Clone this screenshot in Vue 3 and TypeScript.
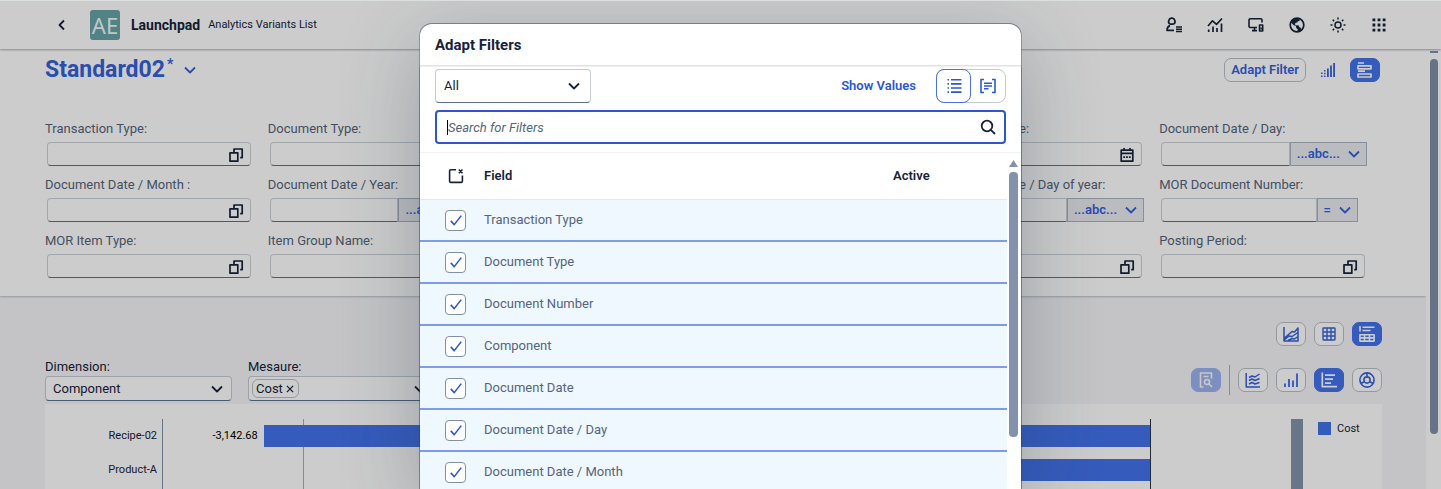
<script setup lang="ts">
import { h, ref } from 'vue'

interface Glyph {
  line?: string
  fill?: string
  width?: number
}

interface FilterField {
  id: string
  label?: string
  kind: 'help' | 'date' | 'operator'
  operator?: string
}

const glyphs: Record<string, Glyph> = {
  back: { line: 'M10 3.5 5.5 8 10 12.5', width: 1.8 },
  down: { line: 'M3 5.5 8 10.5 13 5.5', width: 1.8 },
  copy: { line: 'M2 5.8h7.8v8.4H2zM6 5.5V2h8.2v8.6h-2', width: 1.7 },
  calendar: {
    line: 'M2.2 3.2h11.6v11H2.2zM2.2 6.4h11.6M5 1v3M11 1v3',
    fill: 'M4.3 9.3h1.8v1.8H4.3zM7.1 9.3h1.8v1.8H7.1zM9.9 9.3h1.8v1.8H9.9z',
    width: 1.7,
  },
  person: {
    line: 'M5.8 1.2a3 3.2 0 0 1 1.8 5.9M5.8 1.2a3 3.2 0 0 0-1.8 5.9M4 7.1h3.6M4 8.6C2 9.3 1 11 1 13.3h7',
    fill: 'M10 9.2h6v1.5h-6zM10 11.5h6V13h-6zM10 13.8h6v1.5h-6z',
    width: 1.7,
  },
  trend: {
    line: 'M1 9 5.5 3.8 9.5 7.3 15 1.5M6 9.5V15M10 11V15M14.5 6.5V15M1.7 12.5V15',
    width: 1.7,
  },
  devices: {
    line: 'M9 10.500H2.2c-.8 0-1.2-.4-1.2-1.2V3c0-.8.4-1.2 1.2-1.2h10.6c.8 0 1.2.4 1.2 1.2v2.5M6.500 10.500v3M4 13.600h5M11.500 8h3.200v6h-3.200z',
    fill: 'M12.300 10.500h1.600v2h-1.600z',
    width: 1.6,
  },
  globe: {
    line: 'M8 1.200a6.800 6.800 0 1 1 0 13.600a6.800 6.800 0 0 1 0-13.600z',
    fill: 'M8 1a7 7 0 0 0-6.300 4l3 3.200 2 .5.500 2.300 1.600 1.300L8 15a7 7 0 0 0 4.500-1.700l-.800-2.600-1.500-.600-.200-1.600-3.300-.200-.900-1.200 1-1.300 1.600-.300.300-1.300 1.800-.300.200-2.200z',
    width: 1.7,
  },
  sun: {
    line: 'M8 5a3 3 0 1 1 0 6a3 3 0 0 1 0-6zM8 .5v2M8 13.500v2M.5 8h2M13.500 8h2M2.700 2.700l1.400 1.400M11.900 11.900l1.400 1.400M13.300 2.700l-1.400 1.400M4.100 11.900l-1.400 1.400',
    width: 1.5,
  },
  apps: {
    fill: 'M1.500 1.500h2.800v2.800H1.500zM6.600 1.500h2.800v2.800H6.600zM11.700 1.500h2.800v2.800h-2.800zM1.500 6.600h2.800v2.800H1.500zM6.600 6.600h2.800v2.800H6.600zM11.700 6.600h2.800v2.800h-2.800zM1.500 11.700h2.800v2.800H1.500zM6.600 11.700h2.800v2.800H6.600zM11.700 11.700h2.800v2.800h-2.800z',
  },
  dotbars: {
    line: 'M7.900 6.500V15M11 3.500V15M14.100 1v14',
    fill: 'M1 10.500h1.500V12H1zM1 13.500h1.500V15H1zM4 8h1.500v1.500H4zM4 10.700h1.500v1.500H4zM4 13.500h1.500V15H4z',
    width: 1.8,
  },
  hbars: { line: 'M1 1h6M1 3.800h13v3H1zM1 9.200h7M1 12h13v3H1z', width: 1.7 },
  area: {
    line: 'M1 1v14h14V2l-3.500 4-2.500-.5L1.500 12M1.500 13.800 6 10l3 .5 6-4M5 14.500l4-2 2.500.5 3.500-2.500',
    width: 1.5,
  },
  grid: {
    line: 'M2.700 2h10.600c.4 0 .7.300.7.700v10.600c0 .4-.3.700-.7.700H2.700c-.4 0-.7-.3-.7-.7V2.700c0-.4.300-.7.700-.7zM2 6h12M2 10h12M6 2v12M10 2v12',
    width: 1.4,
  },
  charttable: {
    line: 'M1 0v5.500M3.500 1.200h12M3.500 4.500h8M.9 8.700h14.200v6.400H.9zM.9 11.900h14.200M5.500 8.700v6.400M10.500 8.700v6.400',
    width: 1.6,
  },
  lines: {
    line: 'M1.200 1v14H15M4 5.500l3-1.500 3 1 4.500-3M4 8.500 7 7l3 1.500 4.500-2M4 12l3-1.500 3 1.500 4.500-1.500',
    width: 1.5,
  },
  bars: { line: 'M2 11.500V15M6 7v8M10 8.500V15M14 1.500V15', width: 1.7 },
  hchart: { line: 'M1.300.5v14.200H16M4 3.200h10M4 7.200h8M4 11.200h6', width: 1.7 },
  donut: {
    line: 'M8 .9a7.100 7.100 0 1 1 0 14.200a7.100 7.100 0 0 1 0-14.200zM8 4.900a3.100 3.100 0 1 1 0 6.200a3.100 3.100 0 0 1 0-6.200zM8 1v4M2 11.500l3.500-2M14 11.500l-3.500-2',
    width: 1.6,
  },
  preview: {
    line: 'M5.500 15H2.500V1h11v5.500M5.500 4.500h5M9 7.500a2.500 2.500 0 1 1 0 5a2.500 2.500 0 0 1 0-5zM11 12l3 3',
    width: 1.6,
  },
  list: {
    line: 'M5 1.800h10.500M5 5.900h10.500M5 10h10.500M5 14.100h10.500M1.500 1.800H3M1.500 5.900H3M1.500 10H3M1.500 14.100H3',
    width: 1.6,
  },
  group: { line: 'M4 1.500H1v13h3M12 1.500h3v13h-3M4 5.200h8M4 8h8M4 10.800h4.500', width: 1.6 },
  search: { line: 'M7 1.700a5.300 5.300 0 1 1 0 10.600a5.300 5.300 0 0 1 0-10.600zM10.800 10.800 15 15', width: 1.8 },
  clear: {
    line: 'M8 1.700H2.800c-.8 0-1.200.4-1.200 1.200v10.300c0 .8.4 1.200 1.200 1.200h10.400c.8 0 1.200-.4 1.200-1.200V7.500M10.800 1.500l3.700 3.700M14.500 1.500l-3.700 3.700',
    width: 1.6,
  },
  cross: { line: 'M3 3 13 13M13 3 3 13', width: 2 },
  check: { line: 'M2 9 6 13.300 14 3', width: 1.8 },
}

const Icon = (props: { name: string }) => {
  const g = glyphs[props.name]
  return h('svg', { viewBox: '0 0 16 16', fill: 'none', 'aria-hidden': 'true' }, [
    g.line ? h('path', { d: g.line, stroke: 'currentColor', 'stroke-width': g.width ?? 1.5, 'stroke-linejoin': 'round' }) : null,
    g.fill ? h('path', { d: g.fill, fill: 'currentColor' }) : null,
  ])
}
Icon.props = ['name']

const shellActions = [
  { icon: 'person', label: 'Account' },
  { icon: 'trend', label: 'Analytics' },
  { icon: 'devices', label: 'Devices' },
  { icon: 'globe', label: 'Language' },
  { icon: 'sun', label: 'Theme' },
  { icon: 'apps', label: 'Apps' },
]

const filters: FilterField[] = [
  { id: 'transaction-type', label: 'Transaction Type:', kind: 'help' },
  { id: 'document-type', label: 'Document Type:', kind: 'help' },
  { id: 'document-number', kind: 'help' },
  { id: 'component', kind: 'help' },
  { id: 'document-date', label: 'Document Date:', kind: 'date' },
  { id: 'date-day', label: 'Document Date / Day:', kind: 'operator', operator: '...abc...' },
  { id: 'date-month', label: 'Document Date / Month :', kind: 'help' },
  { id: 'date-year', label: 'Document Date / Year:', kind: 'operator', operator: '...abc...' },
  { id: 'date-quarter', kind: 'help' },
  { id: 'date-week', kind: 'help' },
  { id: 'day-of-year', label: 'Document Date / Day of year:', kind: 'operator', operator: '...abc...' },
  { id: 'mor-number', label: 'MOR Document Number:', kind: 'operator', operator: '=' },
  { id: 'mor-item-type', label: 'MOR Item Type:', kind: 'help' },
  { id: 'item-group', label: 'Item Group Name:', kind: 'help' },
  { id: 'item', kind: 'help' },
  { id: 'plant', kind: 'help' },
  { id: 'year', kind: 'help' },
  { id: 'posting-period', label: 'Posting Period:', kind: 'help' },
]

const viewModes = [
  { icon: 'area', label: 'Chart view', on: false },
  { icon: 'grid', label: 'Table view', on: false },
  { icon: 'charttable', label: 'Chart and table view', on: true },
]

const chartTypes = [
  { icon: 'lines', label: 'Line chart', on: false },
  { icon: 'bars', label: 'Column chart', on: false },
  { icon: 'hchart', label: 'Bar chart', on: true },
  { icon: 'donut', label: 'Donut chart', on: false },
]

const bars = [
  { name: 'Recipe-02', value: '-3,142.68', share: 89.8 },
  { name: 'Product-A', value: '', share: 62 },
]

const fields = ref([
  { name: 'Transaction Type', on: true },
  { name: 'Document Type', on: true },
  { name: 'Document Number', on: true },
  { name: 'Component', on: true },
  { name: 'Document Date', on: true },
  { name: 'Document Date / Day', on: true },
  { name: 'Document Date / Month', on: true },
])
const query = ref('')
</script>

<template>
  <div class="app">
    <header class="shell">
      <button class="plain back" aria-label="Back"><Icon name="back" /></button>
      <span class="logo">AE</span>
      <strong class="product">Launchpad</strong>
      <span class="subtitle">Analytics Variants List</span>
      <nav class="shell-actions">
        <button v-for="a in shellActions" :key="a.icon" class="plain" :aria-label="a.label"><Icon :name="a.icon" /></button>
      </nav>
    </header>

    <div class="body">
      <main class="page">
        <section class="panel">
          <div class="title-row">
            <h1>Standard02<sup>*</sup></h1>
            <button class="plain variant" aria-label="Select variant"><Icon name="down" /></button>
            <div class="title-actions">
              <button class="adapt">Adapt Filter</button>
              <button class="plain ghost" aria-label="Compact filters"><Icon name="dotbars" /></button>
              <button class="tool on" aria-label="Visual filters"><Icon name="hbars" /></button>
            </div>
          </div>
          <div class="filters">
            <div v-for="f in filters" :key="f.id" class="filter">
              <label :for="f.id">{{ f.label }}</label>
              <div class="control" :class="{ split: f.kind === 'operator', narrow: f.operator === '=' }">
                <input :id="f.id" type="text">
                <button v-if="f.kind === 'operator'" class="operator">{{ f.operator }}<Icon name="down" /></button>
                <button v-else class="plain help" aria-label="Value help"><Icon :name="f.kind === 'date' ? 'calendar' : 'copy'" /></button>
              </div>
            </div>
          </div>
        </section>

        <section class="content">
          <div class="tools">
            <button v-for="v in viewModes" :key="v.icon" class="tool" :class="{ on: v.on }" :aria-label="v.label"><Icon :name="v.icon" /></button>
          </div>
          <div class="chart-head">
            <div class="pick">
              <label for="dimension">Dimension:</label>
              <div class="select">
                <select id="dimension"><option>Component</option></select>
                <Icon name="down" />
              </div>
            </div>
            <div class="pick">
              <label for="measure">Mesaure:</label>
              <div class="select tokens">
                <button class="token">Cost<Icon name="cross" /></button>
                <input id="measure" type="text">
                <Icon name="down" />
              </div>
            </div>
            <div class="tools chart-tools">
              <button class="tool on" disabled aria-label="Details"><Icon name="preview" /></button>
              <span class="divider"></span>
              <button v-for="c in chartTypes" :key="c.icon" class="tool" :class="{ on: c.on }" :aria-label="c.label"><Icon :name="c.icon" /></button>
            </div>
          </div>
          <div class="chart">
            <div class="names"><span v-for="b in bars" :key="b.name">{{ b.name }}</span></div>
            <div class="plot">
              <div v-for="b in bars" :key="b.name" class="bar-row">
                <span v-if="b.value">{{ b.value }}</span>
                <div class="bar" :style="{ width: b.share + '%' }"></div>
              </div>
            </div>
            <div class="range"></div>
            <div class="legend"><i></i>Cost</div>
          </div>
        </section>
      </main>
      <div class="page-scroll"><i class="stub"></i><i class="thumb"></i></div>
    </div>

    <div class="overlay">
      <section class="dialog" role="dialog" aria-modal="true" aria-labelledby="dialog-title">
        <h2 id="dialog-title">Adapt Filters</h2>
        <div class="dialog-tools">
          <div class="select tall">
            <select aria-label="Group"><option>All</option></select>
            <Icon name="down" />
          </div>
          <button class="show">Show Values</button>
          <div class="segments">
            <button class="seg picked" aria-label="List"><Icon name="list" /></button>
            <button class="seg" aria-label="Group"><Icon name="group" /></button>
          </div>
        </div>
        <div class="search">
          <i class="caret"></i>
          <input v-model="query" type="text" placeholder="Search for Filters" aria-label="Search for Filters">
          <Icon name="search" />
        </div>
        <div class="table-area">
          <table>
            <thead>
              <tr>
                <th class="tick"><Icon name="clear" /></th>
                <th>Field</th>
                <th class="active">Active</th>
              </tr>
            </thead>
            <tbody>
              <tr v-for="(f, i) in fields" :key="f.name">
                <td class="tick">
                  <span class="box">
                    <input :id="'field' + i" v-model="f.on" type="checkbox">
                    <Icon v-if="f.on" name="check" />
                  </span>
                </td>
                <td><label :for="'field' + i">{{ f.name }}</label></td>
                <td></td>
              </tr>
            </tbody>
          </table>
          <div class="scroll"><i class="arrow"></i><i class="thumb"></i></div>
        </div>
      </section>
    </div>
  </div>
</template>

<style>
body {
  margin: 0;
  overflow: hidden;
}
</style>

<style scoped>
* {
  box-sizing: border-box;
}

.app {
  --blue: #3561dc;
  --fill: #4372eb;
  --ink: #17233a;
  --muted: #56657b;
  position: relative;
  display: flex;
  flex-direction: column;
  height: 100vh;
  overflow: hidden;
  border-top: 1px solid #dcdfe0;
  background: #f5f6f8;
  color: var(--ink);
  font: 13px/16px Roboto, "Noto Sans", sans-serif;
}

button,
input,
select {
  margin: 0;
  padding: 0;
  font: inherit;
  color: inherit;
}

button {
  display: inline-flex;
  align-items: center;
  justify-content: center;
  border: 0;
  background: none;
}

svg {
  width: 16px;
  height: 16px;
  flex: none;
}

.shell {
  position: relative;
  display: flex;
  align-items: center;
  flex: none;
  height: 48px;
  padding: 0 54px;
  background: #fff;
  box-shadow: 0 1px 2px #a5adb8;
}

.back {
  margin-right: 20px;
}

.logo {
  width: 30px;
  height: 30px;
  border-radius: 3px;
  background: #66a3a8;
  color: #f4f8f8;
  font: 22px/31px "Noto Sans", sans-serif;
  text-align: center;
}

.product {
  margin-left: 11px;
  font-size: 14px;
}

.subtitle {
  margin-left: 8px;
  font-size: 11px;
}

.shell-actions {
  display: flex;
  gap: 25px;
  margin-left: auto;
}

.body {
  display: flex;
  flex: 1;
  min-height: 0;
}

.page {
  flex: 1;
  min-width: 0;
}

.panel {
  padding: 8px 44px 18px 45px;
  background: #fff;
  box-shadow: 0 1px 2px #b8bfc6;
}

.title-row {
  display: flex;
  align-items: center;
  height: 26px;
}

h1 {
  margin: 0;
  color: var(--blue);
  font-size: 23px;
  line-height: 24px;
}

sup {
  margin-left: 2px;
  font-size: 14px;
  line-height: 8px;
  vertical-align: 8px;
}

.variant {
  margin-left: 9px;
  color: var(--blue);
}

.title-actions {
  display: flex;
  align-items: center;
  margin-left: auto;
  padding-right: 2px;
}

.adapt {
  height: 24px;
  padding: 0 6px;
  border: 1px solid #b9c0c9;
  border-radius: 7px;
  color: var(--blue);
  font-weight: 600;
}

.ghost {
  margin: 0 14px;
  color: var(--blue);
}

.filters {
  display: grid;
  grid-template-columns: repeat(6, 1fr);
  row-gap: 10px;
  margin-top: 37px;
}

.filter label {
  display: block;
  height: 18px;
  line-height: 18px;
  color: var(--muted);
  white-space: nowrap;
}

.control {
  display: flex;
  position: relative;
  margin: 4px 17px 0 2px;
}

.control input {
  width: 100%;
  min-width: 0;
  height: 24px;
  border: 1px solid #cbd1d8;
  border-bottom-color: #5b738b;
  border-radius: 4px;
  background: #fff;
}

.help {
  position: absolute;
  top: 5px;
  right: 7px;
}

.split {
  margin-right: 15px;
}

.split.narrow {
  margin-right: 24px;
}

.split input {
  flex: 1;
  border-radius: 4px 0 0 4px;
}

.operator {
  flex: none;
  gap: 6px;
  height: 24px;
  padding: 0 4px 0 6px;
  border: 1px solid #a9b4c1;
  background: #eaecef;
  color: var(--blue);
  font-weight: 600;
}

.content {
  padding: 26px 44px 0 45px;
}

.tools {
  display: flex;
  justify-content: flex-end;
  gap: 8px;
}

.tool {
  width: 30px;
  height: 24px;
  border: 1px solid #b9c0c9;
  border-radius: 7px;
  background: #fff;
  color: var(--blue);
}

.tool.on {
  border-color: var(--fill);
  background: var(--fill);
  color: #fff;
}

.tool:disabled {
  opacity: 0.5;
}

.chart-head {
  display: flex;
  gap: 16px;
  margin-top: 12px;
}

.pick {
  width: 187px;
}

.pick label {
  display: block;
  line-height: 18px;
}

.select {
  position: relative;
  display: flex;
  align-items: center;
  height: 25px;
  border: 1px solid #c5ccd4;
  border-bottom-color: #5b738b;
  border-radius: 4px;
  background: #fff;
}

.select select {
  width: 100%;
  height: 100%;
  padding: 0 7px;
  border: 0;
  appearance: none;
  background: none;
}

.select > svg {
  position: absolute;
  right: 6px;
  pointer-events: none;
}

.tokens input {
  width: 100%;
  min-width: 0;
  border: 0;
  background: none;
}

.token {
  flex: none;
  gap: 2px;
  height: 19px;
  margin-left: 3px;
  padding: 0 3px;
  border: 1px solid #b9c0c9;
  border-radius: 6px;
}

.token svg {
  width: 10px;
  height: 10px;
}

.chart-tools {
  align-items: center;
  height: 30px;
  margin: 7px 0 0 auto;
}

.divider {
  width: 1px;
  height: 30px;
  background: #aab1ba;
}

.chart {
  display: flex;
  height: 200px;
  margin-top: 3px;
  padding-top: 15px;
  background: #fff;
}

.names {
  display: flex;
  flex-direction: column;
  width: 118px;
  padding-right: 5px;
  border-right: 1px solid #8091a8;
  font-size: 11px;
  text-align: right;
}

.names span,
.bar-row {
  height: 34px;
  line-height: 34px;
}

.plot {
  flex: 1;
  border-right: 1px solid #2b3544;
  background: linear-gradient(#a8aeb8, #a8aeb8) 14.2% 0 / 1px 100% no-repeat;
}

.bar-row {
  display: flex;
  align-items: center;
  justify-content: flex-end;
  gap: 6px;
  color: #000;
  font-size: 11px;
}

.bar {
  height: 22px;
  background: var(--fill);
}

.range {
  width: 12px;
  margin-left: 140px;
  background: #8394aa;
}

.legend {
  display: flex;
  gap: 6px;
  width: 79px;
  padding: 2px 0 0 15px;
  font-size: 11px;
}

.legend i {
  width: 13px;
  height: 13px;
  margin-top: 1px;
  background: var(--fill);
}

.page-scroll {
  flex: none;
  width: 15px;
  padding: 2px 3px 0 4px;
  background: #fff;
}

.page-scroll i {
  display: block;
  width: 8px;
  background: #8090a8;
}

.stub {
  height: 2px;
  margin-bottom: 6px;
}

.page-scroll .thumb {
  height: 375px;
  border-radius: 4px;
}

.overlay {
  position: absolute;
  inset: 0;
  display: flex;
  justify-content: center;
  padding-top: 23px;
  background: rgb(0 0 0 / 20%);
}

.dialog {
  display: flex;
  flex-direction: column;
  width: 601px;
  border-radius: 12px 12px 0 0;
  background: #fff;
  box-shadow: 0 0 0 1px rgb(50 62 82 / 50%), 0 20px 80px rgb(34 53 72 / 30%);
}

h2 {
  margin: 0;
  padding: 1px 15px 0;
  border-bottom: 1px solid #e0e2e4;
  box-shadow: 0 1px 1px #f0f0f0;
  font-size: 15px;
  line-height: 40px;
}

.dialog-tools {
  display: flex;
  align-items: center;
  padding: 3px 15px 0;
}

.select.tall {
  width: 156px;
  height: 34px;
}

.tall select {
  padding: 0 8px;
}

.tall > svg {
  right: 8px;
}

.show {
  margin-left: auto;
  color: #2b58d0;
  font-weight: 600;
}

.segments {
  display: flex;
  margin-left: 20px;
  border: 1px solid #c4c9d2;
  border-radius: 8px;
}

.seg {
  width: 34px;
  height: 32px;
  color: #2b58d0;
}

.picked {
  width: 35px;
  height: 34px;
  margin: -1px 0 -1px -1px;
  border: 1px solid #4a73dc;
  border-radius: 8px;
}

.search {
  display: flex;
  align-items: center;
  height: 34px;
  margin: 7px 15px 8px;
  padding: 0 8px 0 10px;
  border: 2px solid #2b58d0;
  border-radius: 4px;
}

.caret {
  width: 1px;
  height: 15px;
  background: #000;
}

.search input {
  flex: 1;
  height: 18px;
  padding-top: 1px;
  border: 0;
  outline: 0;
  background: none;
}

.search input::placeholder {
  color: var(--muted);
  font-style: italic;
  opacity: 1;
}

.table-area {
  display: flex;
  flex: 1;
  min-height: 0;
  border-top: 1px solid #f1f2f3;
}

table {
  flex: 1;
  height: max-content;
  border-collapse: separate;
  border-spacing: 0;
  table-layout: fixed;
}

th,
td {
  height: 42px;
  padding: 0;
  text-align: left;
}

th {
  height: 47px;
  border-bottom: 1px solid #e5e8eb;
  font-weight: 600;
}

td {
  border-bottom: 2px solid #7f9ce5;
  background: #eff7ff;
  color: var(--muted);
}

.tick {
  width: 64px;
  padding-left: 25px;
}

th.tick {
  padding-left: 28px;
}

.tick svg {
  display: block;
}

.active {
  width: 114px;
}

.box {
  position: relative;
  display: flex;
  align-items: center;
  justify-content: center;
  width: 21px;
  height: 21px;
}

.box input {
  width: 21px;
  height: 21px;
  appearance: none;
  border: 1px solid #8091a7;
  border-radius: 4px;
  background: #fff;
}

.box svg {
  position: absolute;
  width: 14px;
  height: 14px;
  color: #2b58d0;
  pointer-events: none;
}

.scroll {
  width: 14px;
  padding: 7px 3px 0 2px;
}

.scroll i {
  display: block;
}

.arrow {
  height: 7px;
  margin-bottom: 5px;
  background: #8192aa;
  clip-path: polygon(50% 0, 100% 100%, 0 100%);
}

.scroll .thumb {
  height: 265px;
  border-radius: 4px;
  background: #8192aa;
}
</style>
